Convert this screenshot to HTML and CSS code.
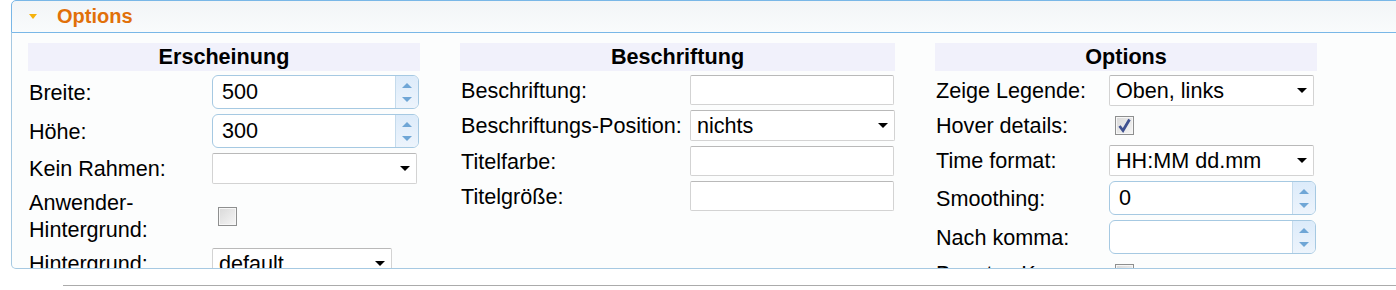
FILE: index.html
```html
<!DOCTYPE html>
<html lang="de">
<head>
    <meta charset="UTF-8">
    <title>Options</title>
    <link rel="stylesheet" href="styles.css">
</head>
<body>

    <div class="accordion">
        <h3 class="acc-header"><span class="acc-icon"></span>Options</h3>

        <div class="acc-content">
            <!-- Erscheinung -->
            <div class="group group-look">
                <div class="group-title">Erscheinung</div>

                <label class="field-label">Breite:</label>
                <span class="spinner">
                    <input type="text" value="500">
                    <span class="spin-buttons"><span class="spin-up"></span><span class="spin-down"></span></span>
                </span>

                <label class="field-label">Höhe:</label>
                <span class="spinner">
                    <input type="text" value="300">
                    <span class="spin-buttons"><span class="spin-up"></span><span class="spin-down"></span></span>
                </span>

                <label class="field-label">Kein Rahmen:</label>
                <span class="select-wrap">
                    <select><option></option></select>
                </span>

                <label class="field-label">Anwender-<br>Hintergrund:</label>
                <span class="checkbox"></span>

                <label class="field-label">Hintergrund:</label>
                <span class="select-wrap select-short">
                    <select><option>default</option></select>
                </span>
            </div>

            <!-- Beschriftung -->
            <div class="group group-caption">
                <div class="group-title">Beschriftung</div>

                <label class="field-label">Beschriftung:</label>
                <input class="text-input" type="text" value="">

                <label class="field-label">Beschriftungs-Position:</label>
                <span class="select-wrap">
                    <select><option>nichts</option></select>
                </span>

                <label class="field-label">Titelfarbe:</label>
                <input class="text-input" type="text" value="">

                <label class="field-label">Titelgröße:</label>
                <input class="text-input" type="text" value="">
            </div>

            <!-- Options -->
            <div class="group group-options">
                <div class="group-title">Options</div>

                <label class="field-label">Zeige Legende:</label>
                <span class="select-wrap">
                    <select><option>Oben, links</option></select>
                </span>

                <label class="field-label">Hover details:</label>
                <span class="checkbox checked">
                    <svg width="17" height="17" viewBox="0 0 17 17"><path d="M3.5 9 L7 13.5 L13.5 2.5" fill="none" stroke="#3f5190" stroke-width="2.8"/></svg>
                </span>

                <label class="field-label">Time format:</label>
                <span class="select-wrap">
                    <select><option>HH:MM dd.mm</option></select>
                </span>

                <label class="field-label">Smoothing:</label>
                <span class="spinner">
                    <input type="text" value="0">
                    <span class="spin-buttons"><span class="spin-up"></span><span class="spin-down"></span></span>
                </span>

                <label class="field-label">Nach komma:</label>
                <span class="spinner">
                    <input type="text" value="">
                    <span class="spin-buttons"><span class="spin-up"></span><span class="spin-down"></span></span>
                </span>

                <label class="field-label">Benutze Komma:</label>
                <span class="checkbox"></span>
            </div>
        </div>
    </div>

    <div class="next-section"></div>

</body>
</html>
```

FILE: styles.css
```css
body {
    margin: 0;
    font-family: "Liberation Sans", Arial, sans-serif;
    background-color: #fff;
    color: #000;
    overflow: hidden;
}

/* Accordion panel */
.accordion {
    margin-left: 11px;
    margin-right: -30px;
}
.acc-header {
    margin: 0;
    height: 31px;
    padding-left: 17px;
    display: flex;
    align-items: center;
    border: 1px solid #79b7e7;
    border-radius: 5px 5px 0 0;
    background: linear-gradient(#f2f5f7, #f9fbfc);
    color: #e17009;
    font-size: 20px;
    font-weight: bold;
}
.acc-icon {
    width: 0;
    height: 0;
    border-left: 4.5px solid transparent;
    border-right: 4.5px solid transparent;
    border-top: 5px solid #f5b20c;
    margin-right: 20px;
}
.acc-content {
    height: 225px;
    padding: 10px 0 0 16px;
    display: flex;
    gap: 40px;
    border: 1px solid #a6c9e2;
    border-top: 0;
    border-radius: 0 0 5px 5px;
    background-color: #fcfdfd;
    overflow: hidden;
}

/* Column groups */
.group {
    display: grid;
    row-gap: 5px;
    align-items: center;
    align-content: start;
    justify-items: start;
}
.group-look {
    grid-template-columns: 184px 208px;
}
.group-caption {
    grid-template-columns: 230px 205px;
}
.group-options {
    grid-template-columns: 174px 208px;
}
.group-title {
    grid-column: 1 / -1;
    justify-self: stretch;
    height: 28px;
    line-height: 28px;
    margin-bottom: -1px;
    background-color: #f1f1fb;
    text-align: center;
    font-size: 21.6px;
    font-weight: bold;
}
.field-label {
    padding-left: 1px;
    font-size: 21.6px;
    line-height: 27px;
}

/* Spinner */
.spinner {
    display: inline-flex;
    width: 207px;
    height: 34px;
    box-sizing: border-box;
    border: 1px solid #a6c9e2;
    border-radius: 6px;
    background-color: #fff;
    overflow: hidden;
}
.spinner input {
    flex: 1;
    min-width: 0;
    padding: 0 0 0 9px;
    border: 0;
    outline: none;
    background: transparent;
    font-family: inherit;
    font-size: 21.6px;
    color: #000;
}
.spin-buttons {
    width: 22px;
    display: flex;
    flex-direction: column;
    border-left: 1px solid #c5dbec;
    background: linear-gradient(#dcebfa, #edf4fc);
}
.spin-up,
.spin-down {
    flex: 1;
    display: flex;
    align-items: center;
    justify-content: center;
}
.spin-up::before,
.spin-down::before {
    content: "";
    border-left: 5px solid transparent;
    border-right: 5px solid transparent;
}
.spin-up::before {
    border-bottom: 5px solid #6fa6d6;
    margin-top: 2px;
}
.spin-down::before {
    border-top: 5px solid #6fa6d6;
    margin-bottom: 2px;
}

/* Selects and text inputs */
.select-wrap {
    position: relative;
    display: inline-block;
}
.select-wrap::after {
    content: "";
    position: absolute;
    right: 7px;
    top: 13px;
    border-left: 5.5px solid transparent;
    border-right: 5.5px solid transparent;
    border-top: 5px solid #000;
    pointer-events: none;
}
.select-wrap select {
    appearance: none;
    -webkit-appearance: none;
    width: 205px;
    height: 31px;
    margin: 0;
    padding: 0 0 0 6px;
    border: 1px solid #d3d3d3;
    border-top-color: #b9b9b9;
    border-radius: 2px;
    background-color: #fff;
    font-family: inherit;
    font-size: 21.6px;
    color: #000;
}
.select-short select {
    width: 180px;
}
.text-input {
    width: 204px;
    height: 30px;
    box-sizing: border-box;
    margin: 0;
    padding: 0 0 0 6px;
    border: 1px solid #d3d3d3;
    border-top-color: #b9b9b9;
    border-radius: 2px;
    background-color: #fff;
    font-family: inherit;
    font-size: 21.6px;
}

/* Checkbox */
.checkbox {
    width: 19px;
    height: 19px;
    box-sizing: border-box;
    margin: 5px 0 5px 6px;
    border: 1px solid #8e8f8f;
    box-shadow: inset 0 0 0 1px #f7f7f7;
    background: linear-gradient(135deg, #d9d9d9, #f6f6f6);
    display: flex;
    align-items: center;
    justify-content: center;
}
.checkbox svg {
    display: block;
}

/* Next section below the panel */
.next-section {
    margin: 16px 0 0 63px;
    border-top: 1px solid #ababab;
}
```
